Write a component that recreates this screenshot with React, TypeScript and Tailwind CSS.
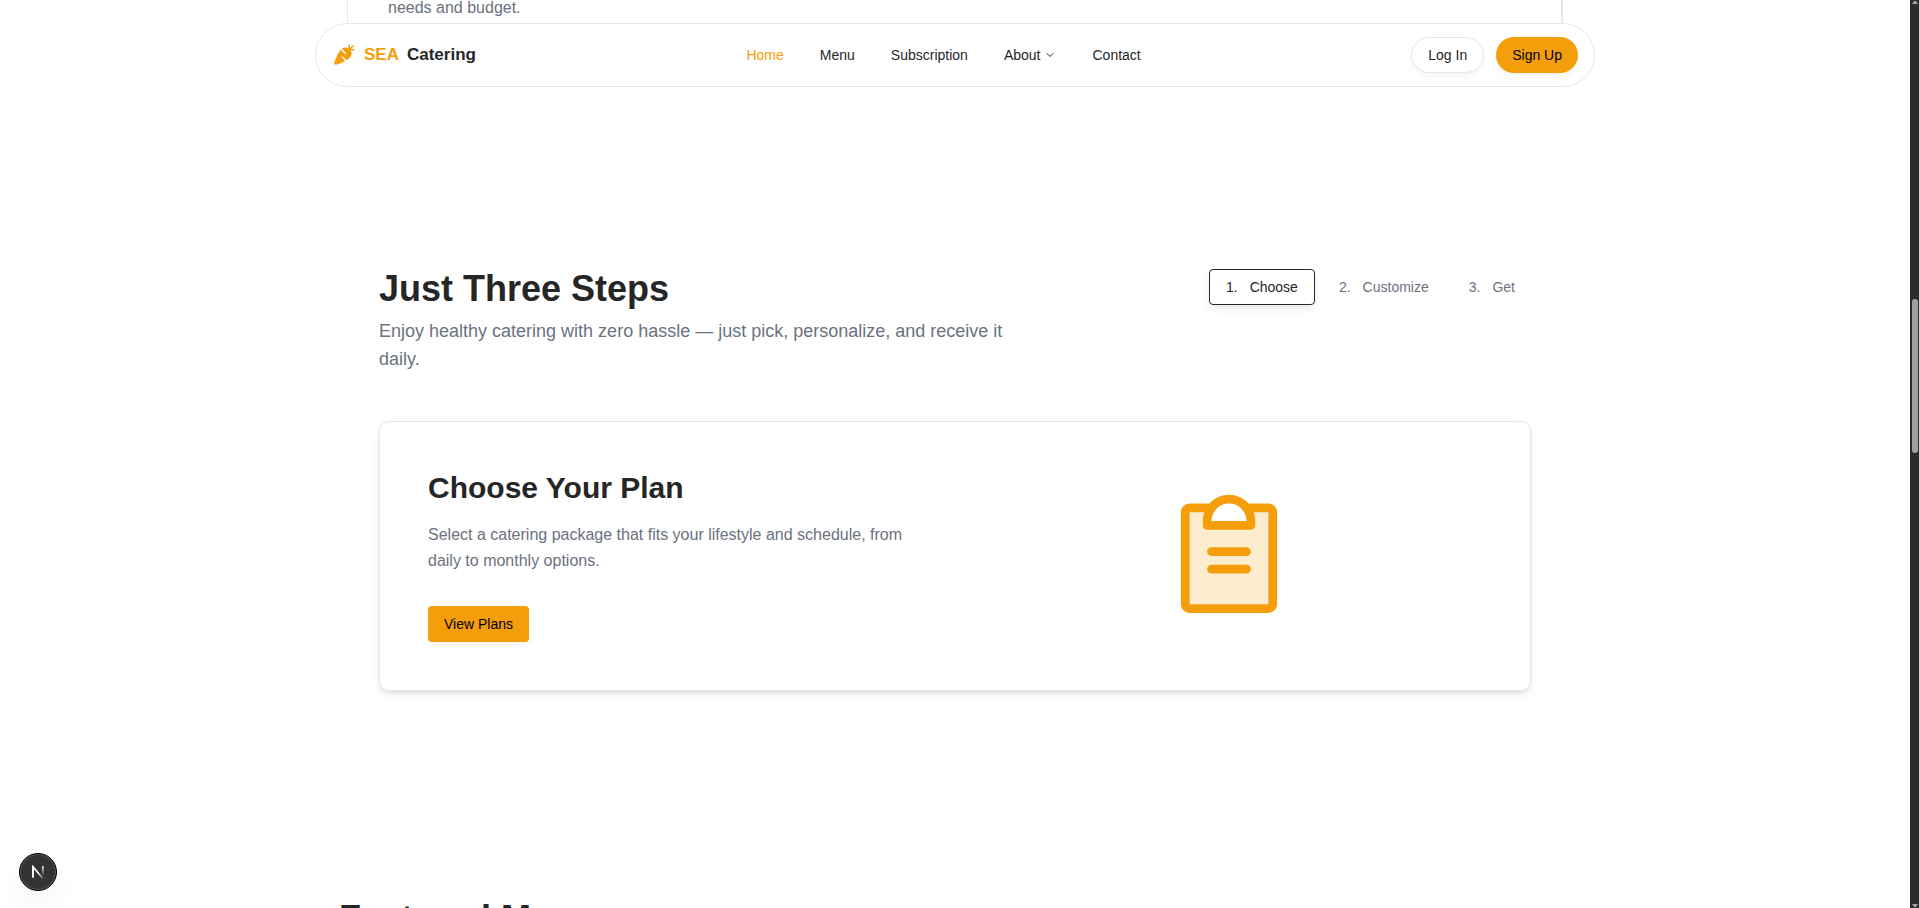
import { useState } from "react";
import { ChevronDown } from "lucide-react";
import { PiCarrotFill, PiClipboardTextDuotone } from "react-icons/pi";

const links = ["Home", "Menu", "Subscription", "About", "Contact"];
const steps = ["Choose", "Customize", "Get"];

function Navbar() {
  return (
    <header className="absolute inset-x-0 top-[23px] z-10 mx-auto flex h-16 max-w-7xl items-center justify-between rounded-full border border-[#e5e7eb] bg-white px-4">
      <a href="#home" className="flex items-center gap-2 text-[17px] leading-7 font-bold">
        <PiCarrotFill className="size-6 text-[#f59e0b]" aria-hidden="true" />
        <span className="text-[#f59e0b]">SEA</span>
        <span>Catering</span>
      </a>
      <nav className="flex items-center gap-9 text-sm">
        {links.map((link) =>
          link === "About" ? (
            <button key={link} type="button" className="flex items-center gap-1">
              About
              <ChevronDown className="size-3" aria-hidden="true" />
            </button>
          ) : (
            <a
              key={link}
              href={`#${link.toLowerCase()}`}
              className={link === "Home" ? "text-[#f59e0b]" : ""}
            >
              {link}
            </a>
          ),
        )}
      </nav>
      <div className="flex items-center gap-3 text-sm">
        <a
          href="#login"
          className="flex h-9 items-center rounded-full border border-[#e5e7eb] bg-white px-4 shadow-[0_4px_8px_-1px_rgba(0,0,0,0.05),0_1px_2px_-2px_rgba(0,0,0,0.05)]"
        >
          Log In
        </a>
        <a
          href="#signup"
          className="flex h-9 items-center rounded-full bg-[#f59e0b] px-4 text-black shadow-[0_4px_8px_-1px_rgba(0,0,0,0.05),0_1px_2px_-2px_rgba(0,0,0,0.05)]"
        >
          Sign Up
        </a>
      </div>
    </header>
  );
}

function StepTabs() {
  const [active, setActive] = useState(0);
  return (
    <div role="tablist" className="flex shrink-0 gap-2 text-sm">
      {steps.map((step, i) => (
        <button
          key={step}
          type="button"
          role="tab"
          aria-selected={active === i}
          onClick={() => setActive(i)}
          className={
            active === i
              ? "flex h-9 items-center gap-3 rounded border border-[#262626] bg-white px-4 text-[#262626] shadow-[0_4px_8px_-1px_rgba(0,0,0,0.1),0_1px_2px_-2px_rgba(0,0,0,0.1)]"
              : "flex h-9 items-center gap-3 rounded px-4 text-[#6b7280]"
          }
        >
          <span>{i + 1}.</span>
          <span>{step}</span>
        </button>
      ))}
    </div>
  );
}

function Steps() {
  return (
    <section className="mx-auto max-w-6xl">
      <div className="mb-12 flex items-start justify-between">
        <div className="max-w-[660px]">
          <h2 className="text-4xl leading-10 font-bold">Just Three Steps</h2>
          <p className="mt-2 text-lg leading-7 text-[#6b7280]">
            Enjoy healthy catering with zero hassle — just pick, personalize, and receive it daily.
          </p>
        </div>
        <StepTabs />
      </div>
      <div className="grid grid-cols-2 items-center gap-10 rounded-[10px] border border-[#e5e7eb] bg-white p-12 shadow-[0_4px_8px_-1px_rgba(0,0,0,0.1),0_2px_4px_-2px_rgba(0,0,0,0.1)]">
        <div>
          <h3 className="text-3xl leading-9 font-bold">Choose Your Plan</h3>
          <p className="mt-4 text-base leading-[26px] text-[#6b7280]">
            Select a catering package that fits your lifestyle and schedule, from daily to monthly options.
          </p>
          <button
            type="button"
            className="mt-8 flex h-9 items-center rounded bg-[#f59e0b] px-4 text-sm text-black shadow-[0_4px_8px_-1px_rgba(0,0,0,0.05),0_1px_2px_-2px_rgba(0,0,0,0.05)]"
          >
            View Plans
          </button>
        </div>
        <div className="flex justify-center">
          <PiClipboardTextDuotone className="size-[140px] text-[#f59e0b]" aria-hidden="true" />
        </div>
      </div>
    </section>
  );
}

function DevBadge() {
  return (
    <button
      type="button"
      aria-label="Open developer tools"
      className="absolute bottom-[17px] left-[19px] z-20 flex size-[38px] items-center justify-center rounded-full border border-black bg-[#333] shadow-[inset_0_0_0_1px_#5a5a5a,0_16px_32px_-8px_rgba(0,0,0,0.12)]"
    >
      <svg viewBox="0 0 14 14" className="size-[14px]" fill="none" aria-hidden="true">
        <defs>
          <linearGradient id="stem" x1="0" y1="1" x2="0" y2="12" gradientUnits="userSpaceOnUse">
            <stop stopColor="#fff" />
            <stop offset="0.9" stopColor="#fff" stopOpacity="0" />
          </linearGradient>
          <linearGradient id="diagonal" x1="7" y1="7" x2="12.5" y2="14" gradientUnits="userSpaceOnUse">
            <stop stopColor="#fff" />
            <stop offset="1" stopColor="#fff" stopOpacity="0.1" />
          </linearGradient>
        </defs>
        <path d="M2 12.5V1.8L11.8 13.6" stroke="url(#diagonal)" strokeWidth="1.7" />
        <path d="M2 12.5V1.2" stroke="#fff" strokeWidth="1.7" />
        <path d="M11.8 1.2V11.5" stroke="url(#stem)" strokeWidth="1.7" />
      </svg>
    </button>
  );
}

function Scrollbar() {
  return (
    <div className="flex w-[9px] shrink-0 flex-col items-center justify-between bg-[#2c2c2c] py-px" aria-hidden="true">
      <svg viewBox="0 0 6 3" className="h-[3px] w-[6px]" fill="#a0a0a0">
        <path d="M0 3 2 0H4L6 3Z" />
      </svg>
      <div className="flex w-[6px] grow flex-col">
        <div className="grow-[295]" />
        <div className="grow-[154] rounded-full bg-[#a0a0a0]" />
        <div className="grow-[451]" />
      </div>
      <svg viewBox="0 0 6 3" className="h-[3px] w-[6px]" fill="#a0a0a0">
        <path d="M0 0H6L4 3H2Z" />
      </svg>
    </div>
  );
}

export default function App() {
  return (
    <div className="relative flex h-screen overflow-hidden bg-white font-['Liberation_Sans',Arial,sans-serif] text-[#262626]">
      <div className="relative min-w-0 grow overflow-hidden">
        <Navbar />
        <main>
          <section className="mx-auto -mt-1 max-w-[1216px] border-x border-r-2 border-[#e5e7eb] px-10 pb-8">
            <p className="text-base leading-6 text-[#6b7280]">needs and budget.</p>
          </section>
          <div className="pt-[217px] pb-52">
            <Steps />
          </div>
          <section className="mx-auto max-w-7xl px-6">
            <h2 className="text-4xl leading-10 font-bold">Featured Menu</h2>
          </section>
        </main>
        <DevBadge />
      </div>
      <Scrollbar />
    </div>
  );
}
